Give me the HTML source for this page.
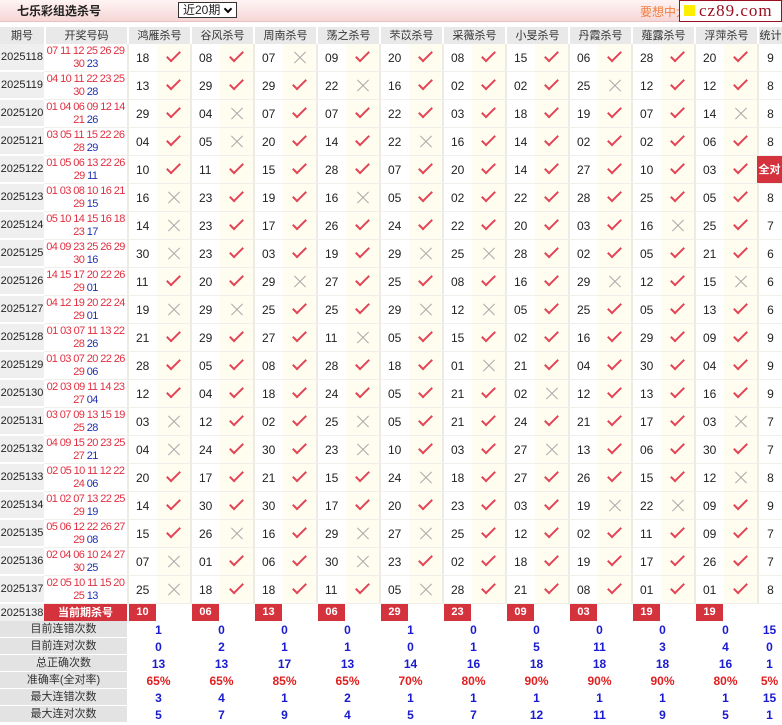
<!DOCTYPE html>
<html><head><meta charset="utf-8"><style>
*{margin:0;padding:0;box-sizing:border-box}
body{width:782px;height:725px;overflow:hidden;background:#fff;font-family:"Liberation Sans","Noto Sans CJK SC",sans-serif;font-size:12px;color:#222;position:relative}
.top{position:absolute;left:0;top:0;width:782px;height:22px;background:linear-gradient(#fff4f4,#f6d6d6);border-bottom:1px solid #e8c0c0}
.ttl{position:absolute;left:17px;top:4px;font-size:12px;line-height:14px;font-weight:bold;color:#222}
.sel{position:absolute;left:178px;top:2px;width:59px;height:16px;border:1px solid #333;background:#fff;font-size:12px;line-height:14px;padding-left:4px}
.sel span{position:absolute;right:5px;top:3px;width:6px;height:6px;border-right:2px solid #000;border-bottom:2px solid #000;transform:rotate(45deg)}
.ad{position:absolute;left:640px;top:5px;color:#f08040;font-size:12px;line-height:14px}
.logo{position:absolute;left:679px;top:0;width:103px;height:22px;border:1px solid #9b1020;background:#fff;color:#9b1020;font-family:"Liberation Serif",serif;font-size:17px;line-height:19px;padding-left:19px;letter-spacing:1px}
.logo:before{content:"";position:absolute;left:4px;top:4px;width:11px;height:11px;background:#ffee00}
table{position:absolute;left:0;top:27px;border-collapse:separate;border-spacing:0;table-layout:fixed;width:782px}
td,th{padding:0;overflow:hidden;white-space:nowrap;line-height:12px}
th{height:17px;background:#e9e9e9;font-weight:normal;font-size:11px;color:#333;border-left:2px solid #fff;text-align:center}
tr.d td{height:28px;border-bottom:1px solid #f0f0ea}
td.q{background:#efefef;text-align:center;font-size:11px;border-bottom:2px solid #fff!important}
td.k{color:#e03040;font-size:11px;letter-spacing:-0.6px;line-height:13px;text-align:center}
td.k b{font-weight:normal;color:#2030b0}
td.n{padding-left:7px;border-left:2px solid #ecebe4}
td.y,td.x{background:#fffdf0;text-align:center;position:relative}
td.y i{display:inline-block;width:7px;height:14px;border-right:2px solid #e24455;border-bottom:2px solid #e24455;transform:rotate(45deg);margin-top:-6px}
td.x i{display:inline-block;position:relative;width:14px;height:14px;vertical-align:middle}
td.x i:before,td.x i:after{content:"";position:absolute;left:-1px;top:6px;width:16px;height:1px;background:#aaa;transform:rotate(45deg)}
td.x i:after{transform:rotate(-45deg)}
td.s{text-align:center;border-left:2px solid #ecebe4}
td.g{background:#d4333d;color:#fff;font-weight:bold;text-align:center}
tr.c td{height:17px}
td.r{padding-left:0;border-left:2px solid #fff}
td.r span{display:inline-block;width:27px;height:17px;background:#d4333d;color:#fff;font-weight:bold;text-align:center;line-height:17px;font-size:11px;vertical-align:top}
tr.t td{height:17px;text-align:center;color:#1a1ad0;font-weight:bold}
tr.t td.l{background:#e3e3e3;color:#333;font-weight:normal;border-bottom:1px solid #fff;font-size:11px}
tr.p td{color:#e02020}
tr.p td.l{color:#333}
</style></head><body>
<div class="top"><div class="ttl">七乐彩组选杀号</div><div class="sel">近20期<span></span></div><div class="ad">要想中大</div><div class="logo">cz89.com</div></div>
<table>
<colgroup><col style="width:44px"><col style="width:83px">
<col style="width:30px"><col style="width:33px"><col style="width:30px"><col style="width:33px"><col style="width:30px"><col style="width:33px"><col style="width:30px"><col style="width:33px"><col style="width:30px"><col style="width:33px"><col style="width:30px"><col style="width:33px"><col style="width:30px"><col style="width:33px"><col style="width:30px"><col style="width:33px"><col style="width:30px"><col style="width:33px"><col style="width:30px"><col style="width:33px"><col style="width:25px"></colgroup>
<tr><th style="border-left:0">期号</th><th>开奖号码</th><th colspan=2>鸿雁杀号</th><th colspan=2>谷风杀号</th><th colspan=2>周南杀号</th><th colspan=2>荡之杀号</th><th colspan=2>芣苡杀号</th><th colspan=2>采薇杀号</th><th colspan=2>小旻杀号</th><th colspan=2>丹霞杀号</th><th colspan=2>薤露杀号</th><th colspan=2>浮萍杀号</th><th>统计</th></tr>
<tr class=d><td class=q>2025118</td><td class=k>07 11 12 25 26 29<br>30 <b>23</b></td><td class=n>18</td><td class=y><i></i></td><td class=n>08</td><td class=y><i></i></td><td class=n>07</td><td class=x><i></i></td><td class=n>09</td><td class=y><i></i></td><td class=n>20</td><td class=y><i></i></td><td class=n>08</td><td class=y><i></i></td><td class=n>15</td><td class=y><i></i></td><td class=n>06</td><td class=y><i></i></td><td class=n>28</td><td class=y><i></i></td><td class=n>20</td><td class=y><i></i></td><td class=s>9</td></tr>
<tr class=d><td class=q>2025119</td><td class=k>04 10 11 22 23 25<br>30 <b>28</b></td><td class=n>13</td><td class=y><i></i></td><td class=n>29</td><td class=y><i></i></td><td class=n>29</td><td class=y><i></i></td><td class=n>22</td><td class=x><i></i></td><td class=n>16</td><td class=y><i></i></td><td class=n>02</td><td class=y><i></i></td><td class=n>02</td><td class=y><i></i></td><td class=n>25</td><td class=x><i></i></td><td class=n>12</td><td class=y><i></i></td><td class=n>12</td><td class=y><i></i></td><td class=s>8</td></tr>
<tr class=d><td class=q>2025120</td><td class=k>01 04 06 09 12 14<br>21 <b>26</b></td><td class=n>29</td><td class=y><i></i></td><td class=n>04</td><td class=x><i></i></td><td class=n>07</td><td class=y><i></i></td><td class=n>07</td><td class=y><i></i></td><td class=n>22</td><td class=y><i></i></td><td class=n>03</td><td class=y><i></i></td><td class=n>18</td><td class=y><i></i></td><td class=n>19</td><td class=y><i></i></td><td class=n>07</td><td class=y><i></i></td><td class=n>14</td><td class=x><i></i></td><td class=s>8</td></tr>
<tr class=d><td class=q>2025121</td><td class=k>03 05 11 15 22 26<br>28 <b>29</b></td><td class=n>04</td><td class=y><i></i></td><td class=n>05</td><td class=x><i></i></td><td class=n>20</td><td class=y><i></i></td><td class=n>14</td><td class=y><i></i></td><td class=n>22</td><td class=x><i></i></td><td class=n>16</td><td class=y><i></i></td><td class=n>14</td><td class=y><i></i></td><td class=n>02</td><td class=y><i></i></td><td class=n>02</td><td class=y><i></i></td><td class=n>06</td><td class=y><i></i></td><td class=s>8</td></tr>
<tr class=d><td class=q>2025122</td><td class=k>01 05 06 13 22 26<br>29 <b>11</b></td><td class=n>10</td><td class=y><i></i></td><td class=n>11</td><td class=y><i></i></td><td class=n>15</td><td class=y><i></i></td><td class=n>28</td><td class=y><i></i></td><td class=n>07</td><td class=y><i></i></td><td class=n>20</td><td class=y><i></i></td><td class=n>14</td><td class=y><i></i></td><td class=n>27</td><td class=y><i></i></td><td class=n>10</td><td class=y><i></i></td><td class=n>03</td><td class=y><i></i></td><td class=g style="font-size:11px">全对</td></tr>
<tr class=d><td class=q>2025123</td><td class=k>01 03 08 10 16 21<br>29 <b>15</b></td><td class=n>16</td><td class=x><i></i></td><td class=n>23</td><td class=y><i></i></td><td class=n>19</td><td class=y><i></i></td><td class=n>16</td><td class=x><i></i></td><td class=n>05</td><td class=y><i></i></td><td class=n>02</td><td class=y><i></i></td><td class=n>22</td><td class=y><i></i></td><td class=n>28</td><td class=y><i></i></td><td class=n>25</td><td class=y><i></i></td><td class=n>05</td><td class=y><i></i></td><td class=s>8</td></tr>
<tr class=d><td class=q>2025124</td><td class=k>05 10 14 15 16 18<br>23 <b>17</b></td><td class=n>14</td><td class=x><i></i></td><td class=n>23</td><td class=y><i></i></td><td class=n>17</td><td class=y><i></i></td><td class=n>26</td><td class=y><i></i></td><td class=n>24</td><td class=y><i></i></td><td class=n>22</td><td class=y><i></i></td><td class=n>20</td><td class=y><i></i></td><td class=n>03</td><td class=y><i></i></td><td class=n>16</td><td class=x><i></i></td><td class=n>25</td><td class=y><i></i></td><td class=s>7</td></tr>
<tr class=d><td class=q>2025125</td><td class=k>04 09 23 25 26 29<br>30 <b>16</b></td><td class=n>30</td><td class=x><i></i></td><td class=n>23</td><td class=y><i></i></td><td class=n>03</td><td class=y><i></i></td><td class=n>19</td><td class=y><i></i></td><td class=n>29</td><td class=x><i></i></td><td class=n>25</td><td class=x><i></i></td><td class=n>28</td><td class=y><i></i></td><td class=n>02</td><td class=y><i></i></td><td class=n>05</td><td class=y><i></i></td><td class=n>21</td><td class=y><i></i></td><td class=s>6</td></tr>
<tr class=d><td class=q>2025126</td><td class=k>14 15 17 20 22 26<br>29 <b>01</b></td><td class=n>11</td><td class=y><i></i></td><td class=n>20</td><td class=y><i></i></td><td class=n>29</td><td class=x><i></i></td><td class=n>27</td><td class=y><i></i></td><td class=n>25</td><td class=y><i></i></td><td class=n>08</td><td class=y><i></i></td><td class=n>16</td><td class=y><i></i></td><td class=n>29</td><td class=x><i></i></td><td class=n>12</td><td class=y><i></i></td><td class=n>15</td><td class=x><i></i></td><td class=s>6</td></tr>
<tr class=d><td class=q>2025127</td><td class=k>04 12 19 20 22 24<br>29 <b>01</b></td><td class=n>19</td><td class=x><i></i></td><td class=n>29</td><td class=x><i></i></td><td class=n>25</td><td class=y><i></i></td><td class=n>25</td><td class=y><i></i></td><td class=n>29</td><td class=x><i></i></td><td class=n>12</td><td class=x><i></i></td><td class=n>05</td><td class=y><i></i></td><td class=n>25</td><td class=y><i></i></td><td class=n>05</td><td class=y><i></i></td><td class=n>13</td><td class=y><i></i></td><td class=s>6</td></tr>
<tr class=d><td class=q>2025128</td><td class=k>01 03 07 11 13 22<br>28 <b>26</b></td><td class=n>21</td><td class=y><i></i></td><td class=n>29</td><td class=y><i></i></td><td class=n>27</td><td class=y><i></i></td><td class=n>11</td><td class=x><i></i></td><td class=n>05</td><td class=y><i></i></td><td class=n>15</td><td class=y><i></i></td><td class=n>02</td><td class=y><i></i></td><td class=n>16</td><td class=y><i></i></td><td class=n>29</td><td class=y><i></i></td><td class=n>09</td><td class=y><i></i></td><td class=s>9</td></tr>
<tr class=d><td class=q>2025129</td><td class=k>01 03 07 20 22 26<br>29 <b>06</b></td><td class=n>28</td><td class=y><i></i></td><td class=n>05</td><td class=y><i></i></td><td class=n>08</td><td class=y><i></i></td><td class=n>28</td><td class=y><i></i></td><td class=n>18</td><td class=y><i></i></td><td class=n>01</td><td class=x><i></i></td><td class=n>21</td><td class=y><i></i></td><td class=n>04</td><td class=y><i></i></td><td class=n>30</td><td class=y><i></i></td><td class=n>04</td><td class=y><i></i></td><td class=s>9</td></tr>
<tr class=d><td class=q>2025130</td><td class=k>02 03 09 11 14 23<br>27 <b>04</b></td><td class=n>12</td><td class=y><i></i></td><td class=n>04</td><td class=y><i></i></td><td class=n>18</td><td class=y><i></i></td><td class=n>24</td><td class=y><i></i></td><td class=n>05</td><td class=y><i></i></td><td class=n>21</td><td class=y><i></i></td><td class=n>02</td><td class=x><i></i></td><td class=n>12</td><td class=y><i></i></td><td class=n>13</td><td class=y><i></i></td><td class=n>16</td><td class=y><i></i></td><td class=s>9</td></tr>
<tr class=d><td class=q>2025131</td><td class=k>03 07 09 13 15 19<br>25 <b>28</b></td><td class=n>03</td><td class=x><i></i></td><td class=n>12</td><td class=y><i></i></td><td class=n>02</td><td class=y><i></i></td><td class=n>25</td><td class=x><i></i></td><td class=n>05</td><td class=y><i></i></td><td class=n>21</td><td class=y><i></i></td><td class=n>24</td><td class=y><i></i></td><td class=n>21</td><td class=y><i></i></td><td class=n>17</td><td class=y><i></i></td><td class=n>03</td><td class=x><i></i></td><td class=s>7</td></tr>
<tr class=d><td class=q>2025132</td><td class=k>04 09 15 20 23 25<br>27 <b>21</b></td><td class=n>04</td><td class=x><i></i></td><td class=n>24</td><td class=y><i></i></td><td class=n>30</td><td class=y><i></i></td><td class=n>23</td><td class=x><i></i></td><td class=n>10</td><td class=y><i></i></td><td class=n>03</td><td class=y><i></i></td><td class=n>27</td><td class=x><i></i></td><td class=n>13</td><td class=y><i></i></td><td class=n>06</td><td class=y><i></i></td><td class=n>30</td><td class=y><i></i></td><td class=s>7</td></tr>
<tr class=d><td class=q>2025133</td><td class=k>02 05 10 11 12 22<br>24 <b>06</b></td><td class=n>20</td><td class=y><i></i></td><td class=n>17</td><td class=y><i></i></td><td class=n>21</td><td class=y><i></i></td><td class=n>15</td><td class=y><i></i></td><td class=n>24</td><td class=x><i></i></td><td class=n>18</td><td class=y><i></i></td><td class=n>27</td><td class=y><i></i></td><td class=n>26</td><td class=y><i></i></td><td class=n>15</td><td class=y><i></i></td><td class=n>12</td><td class=x><i></i></td><td class=s>8</td></tr>
<tr class=d><td class=q>2025134</td><td class=k>01 02 07 13 22 25<br>29 <b>19</b></td><td class=n>14</td><td class=y><i></i></td><td class=n>30</td><td class=y><i></i></td><td class=n>30</td><td class=y><i></i></td><td class=n>17</td><td class=y><i></i></td><td class=n>20</td><td class=y><i></i></td><td class=n>23</td><td class=y><i></i></td><td class=n>03</td><td class=y><i></i></td><td class=n>19</td><td class=x><i></i></td><td class=n>22</td><td class=x><i></i></td><td class=n>09</td><td class=y><i></i></td><td class=s>9</td></tr>
<tr class=d><td class=q>2025135</td><td class=k>05 06 12 22 26 27<br>29 <b>08</b></td><td class=n>15</td><td class=y><i></i></td><td class=n>26</td><td class=x><i></i></td><td class=n>16</td><td class=y><i></i></td><td class=n>29</td><td class=x><i></i></td><td class=n>27</td><td class=x><i></i></td><td class=n>25</td><td class=y><i></i></td><td class=n>12</td><td class=y><i></i></td><td class=n>02</td><td class=y><i></i></td><td class=n>11</td><td class=y><i></i></td><td class=n>09</td><td class=y><i></i></td><td class=s>7</td></tr>
<tr class=d><td class=q>2025136</td><td class=k>02 04 06 10 24 27<br>30 <b>25</b></td><td class=n>07</td><td class=x><i></i></td><td class=n>01</td><td class=y><i></i></td><td class=n>06</td><td class=y><i></i></td><td class=n>30</td><td class=x><i></i></td><td class=n>23</td><td class=y><i></i></td><td class=n>02</td><td class=y><i></i></td><td class=n>18</td><td class=y><i></i></td><td class=n>19</td><td class=y><i></i></td><td class=n>17</td><td class=y><i></i></td><td class=n>26</td><td class=y><i></i></td><td class=s>7</td></tr>
<tr class=d><td class=q>2025137</td><td class=k>02 05 10 11 15 20<br>25 <b>13</b></td><td class=n>25</td><td class=x><i></i></td><td class=n>18</td><td class=y><i></i></td><td class=n>18</td><td class=y><i></i></td><td class=n>11</td><td class=y><i></i></td><td class=n>05</td><td class=x><i></i></td><td class=n>28</td><td class=y><i></i></td><td class=n>21</td><td class=y><i></i></td><td class=n>08</td><td class=y><i></i></td><td class=n>01</td><td class=y><i></i></td><td class=n>01</td><td class=y><i></i></td><td class=s>8</td></tr>
<tr class=c><td class=q style="border-bottom:0!important">2025138</td><td class=g style="font-size:11px">当前期杀号</td><td class=r colspan=2><span>10</span></td><td class=r colspan=2><span>06</span></td><td class=r colspan=2><span>13</span></td><td class=r colspan=2><span>06</span></td><td class=r colspan=2><span>29</span></td><td class=r colspan=2><span>23</span></td><td class=r colspan=2><span>09</span></td><td class=r colspan=2><span>03</span></td><td class=r colspan=2><span>19</span></td><td class=r colspan=2><span>19</span></td><td></td></tr>
<tr class=t><td class=l colspan=2>目前连错次数</td><td colspan=2>1</td><td colspan=2>0</td><td colspan=2>0</td><td colspan=2>0</td><td colspan=2>1</td><td colspan=2>0</td><td colspan=2>0</td><td colspan=2>0</td><td colspan=2>0</td><td colspan=2>0</td><td>15</td></tr>
<tr class=t><td class=l colspan=2>目前连对次数</td><td colspan=2>0</td><td colspan=2>2</td><td colspan=2>1</td><td colspan=2>1</td><td colspan=2>0</td><td colspan=2>1</td><td colspan=2>5</td><td colspan=2>11</td><td colspan=2>3</td><td colspan=2>4</td><td>0</td></tr>
<tr class=t><td class=l colspan=2>总正确次数</td><td colspan=2>13</td><td colspan=2>13</td><td colspan=2>17</td><td colspan=2>13</td><td colspan=2>14</td><td colspan=2>16</td><td colspan=2>18</td><td colspan=2>18</td><td colspan=2>18</td><td colspan=2>16</td><td>1</td></tr>
<tr class="t p"><td class=l colspan=2>准确率(全对率)</td><td colspan=2>65%</td><td colspan=2>65%</td><td colspan=2>85%</td><td colspan=2>65%</td><td colspan=2>70%</td><td colspan=2>80%</td><td colspan=2>90%</td><td colspan=2>90%</td><td colspan=2>90%</td><td colspan=2>80%</td><td>5%</td></tr>
<tr class=t><td class=l colspan=2>最大连错次数</td><td colspan=2>3</td><td colspan=2>4</td><td colspan=2>1</td><td colspan=2>2</td><td colspan=2>1</td><td colspan=2>1</td><td colspan=2>1</td><td colspan=2>1</td><td colspan=2>1</td><td colspan=2>1</td><td>15</td></tr>
<tr class=t><td class=l colspan=2>最大连对次数</td><td colspan=2>5</td><td colspan=2>7</td><td colspan=2>9</td><td colspan=2>4</td><td colspan=2>5</td><td colspan=2>7</td><td colspan=2>12</td><td colspan=2>11</td><td colspan=2>9</td><td colspan=2>5</td><td>1</td></tr>
</table>
</body></html>
